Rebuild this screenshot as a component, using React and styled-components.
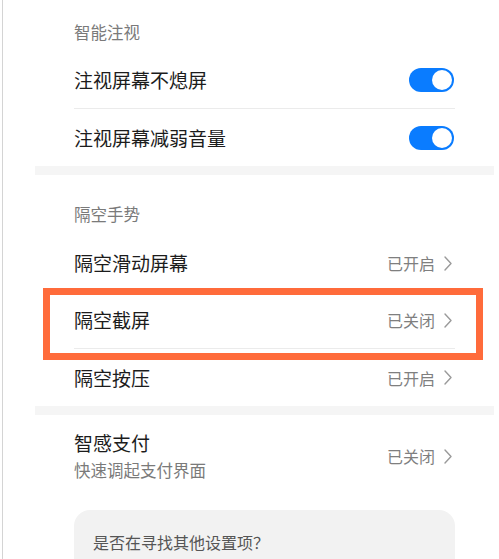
import styled, { createGlobalStyle } from "styled-components";

const Global = createGlobalStyle`
  html, body {
    margin: 0;
    padding: 0;
    background: #ffffff;
    font-family: "Noto Sans CJK SC", "Noto Sans", sans-serif;
  }
`;

const Page = styled.div`
  width: 499px;
  height: 559px;
  overflow: hidden;
  box-sizing: border-box;
  padding-left: 2px;
`;

const Frame = styled.div`
  height: 100%;
  border-left: 1px solid #d4d4d4;
  padding-left: 32px;
  padding-right: 5px;
`;

const Group = styled.section`
  padding: 0 39px;
`;

const Gap = styled.div`
  height: 9px;
  background: #f5f5f5;
`;

const GroupTitle = styled.div`
  padding-top: ${(p) => p.$top}px;
  margin-bottom: ${(p) => p.$bottom}px;
  line-height: 24px;
  font-size: 16.5px;
  color: #7a7a7a;
`;

const Row = styled.div`
  position: relative;
  display: flex;
  align-items: center;
  justify-content: space-between;
  height: 56px;
  border-bottom: ${(p) => (p.$last ? "none" : "1px solid #ebebeb")};
  ${(p) => (p.$last ? "height: 57px;" : "")}
`;

const TallRow = styled(Row)`
  height: auto;
  padding: 15px 0 12px;
`;

const Label = styled.div`
  font-size: 19px;
  line-height: 26px;
  color: #1c1c1c;
`;

const Sub = styled.div`
  margin-top: 2px;
  font-size: 16.5px;
  line-height: 24px;
  color: #7a7a7a;
`;

const Value = styled.div`
  display: flex;
  align-items: center;
  gap: 9px;
  font-size: 16px;
  color: #7f7f7f;
  margin-right: 3px;
`;

const Toggle = styled.div`
  position: relative;
  width: 45px;
  height: 24px;
  border-radius: 12px;
  background: #0a7cff;
  margin-right: 1px;
  &::after {
    content: "";
    position: absolute;
    top: 2px;
    right: 2px;
    width: 20px;
    height: 20px;
    border-radius: 50%;
    background: #ffffff;
  }
`;

const Highlight = styled.div`
  position: absolute;
  left: -31px;
  right: -28px;
  top: -4px;
  bottom: -12px;
  border: 7px solid #ff6b3b;
  pointer-events: none;
`;

const SearchCard = styled.div`
  margin-top: 16px;
  height: 110px;
  border-radius: 16px;
  background: #f2f2f2;
  padding: 20px 19px;
  box-sizing: border-box;
  font-size: 16px;
  line-height: 24px;
  color: #555555;
`;

const Chevron = () => (
  <svg width="8" height="15" viewBox="0 0 8 15" fill="none">
    <polyline
      points="1,1 7,7.5 1,14"
      stroke="#9a9a9a"
      strokeWidth="1.4"
      strokeLinecap="round"
      strokeLinejoin="round"
    />
  </svg>
);

export default function App() {
  return (
    <>
      <Global />
      <Page>
        <Frame>
          <Group>
            <GroupTitle $top={20} $bottom={8}>智能注视</GroupTitle>
            <Row>
              <Label>注视屏幕不熄屏</Label>
              <Toggle />
            </Row>
            <Row $last>
              <Label>注视屏幕减弱音量</Label>
              <Toggle />
            </Row>
          </Group>
          <Gap />
          <Group>
            <GroupTitle $top={27} $bottom={9}>隔空手势</GroupTitle>
            <Row>
              <Label>隔空滑动屏幕</Label>
              <Value>
                已开启
                <Chevron />
              </Value>
            </Row>
            <Row>
              <Label>隔空截屏</Label>
              <Value>
                已关闭
                <Chevron />
              </Value>
              <Highlight />
            </Row>
            <Row $last>
              <Label>隔空按压</Label>
              <Value>
                已开启
                <Chevron />
              </Value>
            </Row>
          </Group>
          <Gap />
          <Group>
            <TallRow $last>
              <div>
                <Label>智感支付</Label>
                <Sub>快速调起支付界面</Sub>
              </div>
              <Value>
                已关闭
                <Chevron />
              </Value>
            </TallRow>
            <SearchCard>是否在寻找其他设置项？</SearchCard>
          </Group>
        </Frame>
      </Page>
    </>
  );
}
